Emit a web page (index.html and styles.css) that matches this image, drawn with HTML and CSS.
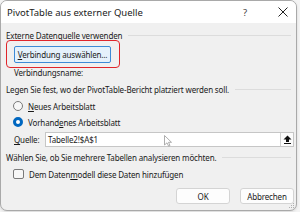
FILE: index.html
```html
<!DOCTYPE html>
<html lang="de">
<head>
<meta charset="utf-8">
<title>PivotTable aus externer Quelle</title>
<link rel="stylesheet" href="styles.css">
</head>
<body>
<div class="window">
  <div class="titlebar">
    <span class="title">PivotTable aus externer Quelle</span>
    <span class="help">?</span>
    <span class="close"><svg width="10" height="10" viewBox="0 0 10 10"><path d="M0.5 0.5L9.5 9.5M9.5 0.5L0.5 9.5" stroke="#222" stroke-width="1" fill="none"/></svg></span>
  </div>
  <div class="content">
    <div class="group first">Externe Datenquelle verwenden</div>
    <div class="connrow"><button class="btn conn"><u>V</u>erbindung auswählen...</button></div>
    <div class="indent name">Verbindungsname:</div>
    <div class="group">Legen Sie fest, wo der PivotTable-Bericht platziert werden soll.</div>
    <div class="radio r1"><span class="rb"></span><span><u>N</u>eues Arbeitsblatt</span></div>
    <div class="radio r2"><span class="rb on"></span><span>Vorhand<u>e</u>nes Arbeitsblatt</span></div>
    <div class="source">
      <span class="srclabel"><u>Q</u>uelle:</span>
      <div class="input">
        <span class="value">Tabelle2!$A$1</span>
        <span class="pick"><svg width="9" height="9" viewBox="0 0 9 9"><path d="M4.5 0.5L8.5 4.5H6V7H3V4.5H0.5Z" fill="#111"/><rect x="1" y="8" width="7" height="1" fill="#111"/></svg></span>
      </div>
    </div>
    <div class="group">Wählen Sie, ob Sie mehrere Tabellen analysieren möchten.</div>
    <div class="check"><span class="cb"></span><span>Dem Daten<u>m</u>odell diese Daten hinzufügen</span></div>
    <div class="actions">
      <button class="btn">OK</button>
      <button class="btn">Abbrechen</button>
    </div>
  </div>
  <div class="highlight"></div>
  <svg class="cursor" width="8" height="12" viewBox="0 0 8 12"><path d="M0.5 0.5V10L3 7.8L4.6 11.2L6 10.5L4.5 7.3H7.5Z" fill="#fff" stroke="#999" stroke-width="0.8"/></svg>
  <svg class="grip" width="6" height="6" viewBox="0 0 6 6"><g fill="#b0b0b0"><rect x="4" y="0" width="1" height="1"/><rect x="2" y="2" width="1" height="1"/><rect x="4" y="2" width="1" height="1"/><rect x="0" y="4" width="1" height="1"/><rect x="2" y="4" width="1" height="1"/><rect x="4" y="4" width="1" height="1"/></g></svg>
</div>
</body>
</html>
```

FILE: styles.css
```css
* { box-sizing: border-box; }
html, body { margin: 0; padding: 0; }
body {
  width: 300px;
  height: 212px;
  background: #f4f4f4;
  font-family: "Noto Sans", "DejaVu Sans", sans-serif;
  font-size: 8px;
  letter-spacing: -0.15px;
  color: #1a1a1a;
  overflow: hidden;
}
u { text-decoration: underline; text-underline-offset: 1px; }

.window {
  position: relative;
  width: 297px;
  height: 211px;
  background: #f0f0f0;
  border: 1px solid #a9a9a9;
  border-radius: 7px;
  overflow: hidden;
  box-shadow: 0 1px 3px rgba(0,0,0,0.12);
}

.titlebar {
  height: 22px;
  background: #ffffff;
  display: flex;
  align-items: center;
  padding-left: 6px;
}
.title { font-size: 9.5px; letter-spacing: 0; color: #1a1a1a; flex: 1; }
.help { font-size: 9.5px; color: #444; width: 10px; margin-right: 25px; }
.close { width: 10px; height: 10px; margin-right: 8px; display: flex; }

.content {
  display: flex;
  flex-direction: column;
  padding: 0 2px 0 5px;
}
.group {
  display: flex;
  align-items: center;
  height: 14px;
  margin-top: 3px;
  white-space: nowrap;
}
.group::after {
  content: "";
  flex: 1;
  border-top: 1px solid #dcdcdc;
  margin-left: 6px;
  margin-right: 3px;
}
.group.first { margin-top: 5px; }

.btn {
  font-family: inherit;
  font-size: 8px;
  letter-spacing: -0.15px;
  color: #1a1a1a;
  background: #fdfdfd;
  border: 1px solid #d4d4d4;
  border-radius: 3px;
  padding: 0;
  height: 16px;
}
.connrow { display: flex; margin-top: 4px; padding-left: 8px; }
.btn.conn {
  width: 97px;
  height: 17px;
  background: #e5f1fb;
  border: 1px solid #3d8ad6;
  border-radius: 2px;
}
.indent { padding-left: 8px; height: 14px; display: flex; align-items: center; }
.name { margin-top: 2px; }

.radio, .check {
  display: flex;
  align-items: center;
  height: 14px;
  padding-left: 7px;
}
.r1 { margin-top: 3px; }
.r2 { margin-top: 2px; }
.rb {
  width: 10px;
  height: 10px;
  border-radius: 50%;
  border: 1px solid #7a7a7a;
  background: #f7f7f7;
  margin-right: 5px;
}
.rb.on {
  border: 3px solid #0067c0;
  background: #ffffff;
}

.source {
  display: flex;
  align-items: center;
  margin-top: 3px;
  padding-left: 8px;
}
.srclabel { width: 31px; }
.input {
  flex: 1;
  height: 15px;
  background: #ffffff;
  border: 1px solid #c6c6c6;
  display: flex;
  align-items: center;
  padding-left: 2px;
}
.value { flex: 1; }
.pick {
  width: 13px;
  height: 13px;
  border-left: 1px solid #d0d0d0;
  background: #fbfbfb;
  display: flex;
  align-items: center;
  justify-content: center;
}

.check { margin-top: 3px; }
.cb {
  width: 11px;
  height: 10px;
  border: 1px solid #7a7a7a;
  border-radius: 2px;
  background: #f7f7f7;
  margin-right: 5px;
}

.actions {
  display: flex;
  justify-content: flex-end;
  gap: 10px;
  margin-top: 7px;
}
.actions .btn { width: 54px; }

.highlight {
  position: absolute;
  left: 5px;
  top: 39px;
  width: 114px;
  height: 28px;
  border: 1.5px solid #e0252b;
  border-radius: 4px;
}
.cursor { position: absolute; left: 163px; top: 134px; }
.grip { position: absolute; right: 1px; bottom: 1px; }
```
